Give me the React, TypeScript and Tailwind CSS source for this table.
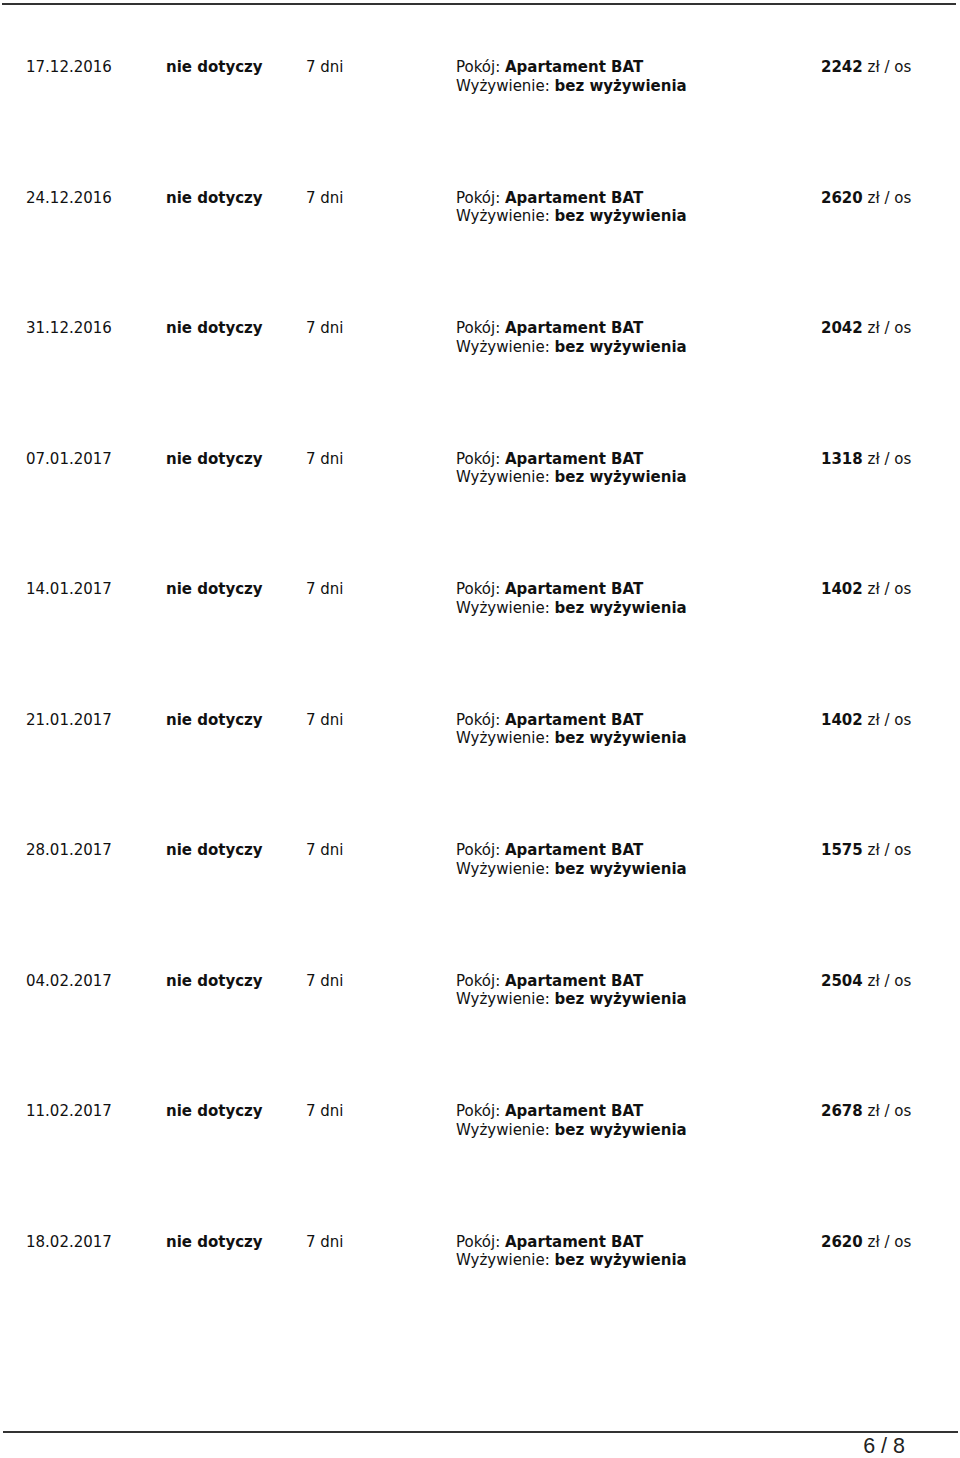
import React from "react";

const rows = [
  ["17.12.2016", "2242"],
  ["24.12.2016", "2620"],
  ["31.12.2016", "2042"],
  ["07.01.2017", "1318"],
  ["14.01.2017", "1402"],
  ["21.01.2017", "1402"],
  ["28.01.2017", "1575"],
  ["04.02.2017", "2504"],
  ["11.02.2017", "2678"],
  ["18.02.2017", "2620"],
];

export default function App() {
  return (
    <div
      className="relative w-[960px] h-[1458px] bg-white text-[#111] overflow-hidden"
      style={{ fontFamily: '"DejaVu Sans", sans-serif' }}
    >
      <div className="pt-[3px] pl-[2px] w-[956px]">
        <div className="h-[2px] bg-[#333]" />
      </div>
      <div className="pt-[53px] text-[15px] leading-[18.7px]">
        {rows.map(([d, p], i) => (
          <div key={i} className="flex h-[130.5px] pl-[26px]">
            <div className="w-[140px]">{d}</div>
            <div className="w-[140px] font-bold">nie dotyczy</div>
            <div className="w-[150px]">7 dni</div>
            <div className="w-[365px]">
              <div>
                Pokój: <span className="font-bold">Apartament BAT</span>
              </div>
              <div>
                Wyżywienie: <span className="font-bold">bez wyżywienia</span>
              </div>
            </div>
            <div>
              <span className="font-bold">{p}</span> zł / os
            </div>
          </div>
        ))}
      </div>
      <div className="absolute left-[3px] top-[1431px] w-[955px] h-[2px] bg-[#333]" />
      <div
        className="absolute right-[55px] top-[1434px] text-[21.5px] leading-[24px] text-[#222]"
        style={{ fontFamily: '"Liberation Sans", Arial, sans-serif' }}
      >
        6 / 8
      </div>
    </div>
  );
}
